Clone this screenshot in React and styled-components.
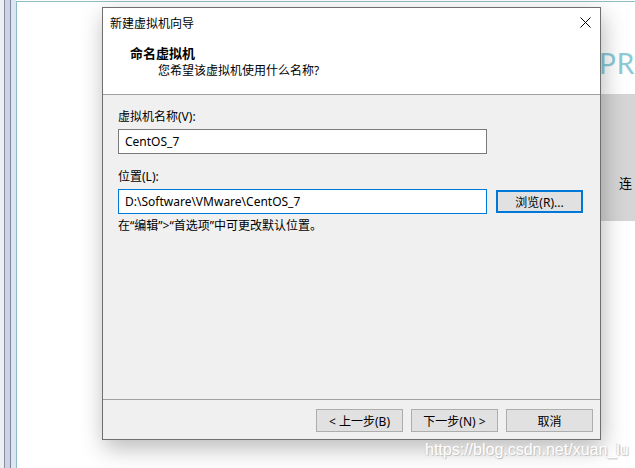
import styled, { createGlobalStyle } from "styled-components"

// VMware "new virtual machine" wizard, name page, over the workstation home view.

const Global = createGlobalStyle`
    html, body {
        margin: 0;
        padding: 0;
        background: #ffffff;
    }
    body {
        width: 635px;
        height: 468px;
        overflow: hidden;
        font-family: "Noto Sans", "Noto Sans CJK SC", sans-serif;
        font-size: 12px;
        color: #000000;
    }
`

const Desktop = styled.div`
    position: relative;
    width: 635px;
    height: 468px;
    overflow: hidden;
    display: flex;
    background: #ffffff;
`

const Rail = styled.div`
    display: flex;
    width: 16px;
    flex-shrink: 0;
`

const Strip = styled.div`
    width: ${p => p.w}px;
    background: ${p => p.bg};
`

const Main = styled.div`
    flex: 1;
    margin-top: 1px;
    border-top: 1px solid #8dbcc8;
    border-left: 1px solid #8dbcc8;
    display: flex;
    flex-direction: column;
    min-width: 0;
`

const Hero = styled.div`
    height: 92px;
    padding-left: 582px;
    padding-top: 30px;
    box-sizing: border-box;
    display: flex;
    align-items: center;
    white-space: nowrap;
    font-family: Lato, "Noto Sans", sans-serif;
    font-weight: 400;
    font-size: 28px;
    letter-spacing: 1px;
    color: #8ccad8;
`

const Band = styled.div`
    margin-left: 380px;
    height: 127px;
    background: #d5d5d5;
    padding-left: 222px;
    display: flex;
    align-items: center;
    padding-top: 50px;
    box-sizing: border-box;
    white-space: nowrap;
    font-size: 13px;
`

const Dialog = styled.div`
    position: absolute;
    left: 102px;
    top: 7px;
    width: 499px;
    height: 433px;
    box-sizing: border-box;
    border: 1px solid #6f6f6f;
    background: #f0f0f0;
    display: flex;
    flex-direction: column;
    box-shadow: 2px 8px 22px rgba(0, 0, 0, 0.28);
`

const TitleBar = styled.div`
    height: 29px;
    flex-shrink: 0;
    background: #ffffff;
    display: flex;
    align-items: center;
    justify-content: space-between;
    padding: 0 9px 0 7px;
    font-size: 12px;
`

const Close = styled.svg`
    width: 11px;
    height: 11px;
    display: block;
`

const Header = styled.div`
    flex-shrink: 0;
    background: #ffffff;
    border-bottom: 1px solid #a0a0a0;
    padding: 7px 0 0 27px;
    box-sizing: border-box;
    height: 58px;
`

const Heading = styled.div`
    font-weight: 700;
    font-size: 13px;
    line-height: 18px;
`

const Sub = styled.div`
    margin-left: 28px;
    line-height: 18px;
`

const Body = styled.div`
    flex: 1;
    border-bottom: 1px solid #a0a0a0;
    padding: 14px 0 0 15px;
`

const Field = styled.div`
    margin-top: ${p => p.gap || 0}px;
`

const Label = styled.div`
    line-height: 16px;
    margin-bottom: 4px;
`

const Row = styled.div`
    display: flex;
    align-items: center;
    gap: 9px;
`

const Input = styled.div`
    width: 369px;
    height: 25px;
    box-sizing: border-box;
    border: 1px solid ${p => (p.focused ? "#0078d7" : "#7a7a7a")};
    background: #ffffff;
    padding-left: 6px;
    display: flex;
    align-items: center;
    white-space: nowrap;
`

const Button = styled.div`
    width: 87px;
    height: 23px;
    box-sizing: border-box;
    border: ${p => (p.primary ? "2px solid #0078d7" : "1px solid #adadad")};
    background: #e1e1e1;
    display: flex;
    align-items: center;
    justify-content: center;
    white-space: nowrap;
`

const Hint = styled.div`
    margin-top: 4px;
    line-height: 16px;
`

const Footer = styled.div`
    height: 39px;
    flex-shrink: 0;
    box-sizing: border-box;
    padding: 9px 7px 0 0;
    display: flex;
    justify-content: flex-end;
    gap: 8px;
`

const Watermark = styled.div`
    position: absolute;
    left: 425px;
    top: 441px;
    font-family: "Liberation Sans", Arial, sans-serif;
    font-size: 16px;
    color: #ffffff;
    text-shadow: 1px 1px 1px #bdbdbd, -1px 0 1px #d6d6d6;
    white-space: nowrap;
`

const App = () => {
    return (
        <Desktop>
            <Global />
            <Rail>
                <Strip w={4} bg="#eceff4" />
                <Strip w={1} bg="#8a8c96" />
                <Strip w={5} bg="#ccd2ea" />
                <Strip w={1} bg="#7e8792" />
                <Strip w={5} bg="#dbe6f2" />
            </Rail>
            <Main>
                <Hero>PRO</Hero>
                <Band>连</Band>
            </Main>

            <Dialog>
                <TitleBar>
                    <span>新建虚拟机向导</span>
                    <Close viewBox="0 0 11 11">
                        <path d="M0.5 0.5 L10.5 10.5 M10.5 0.5 L0.5 10.5" stroke="#000" strokeWidth="1" fill="none" />
                    </Close>
                </TitleBar>
                <Header>
                    <Heading>命名虚拟机</Heading>
                    <Sub>您希望该虚拟机使用什么名称?</Sub>
                </Header>
                <Body>
                    <Field>
                        <Label>虚拟机名称(V):</Label>
                        <Input>CentOS_7</Input>
                    </Field>
                    <Field gap={15}>
                        <Label>位置(L):</Label>
                        <Row>
                            <Input focused>D:\Software\VMware\CentOS_7</Input>
                            <Button primary>浏览(R)...</Button>
                        </Row>
                    </Field>
                    <Hint>在“编辑”&gt;“首选项”中可更改默认位置。</Hint>
                </Body>
                <Footer>
                    <Button>&lt; 上一步(B)</Button>
                    <Button>下一步(N) &gt;</Button>
                    <Button>取消</Button>
                </Footer>
            </Dialog>

            <Watermark>https://blog.csdn.net/xuan_lu</Watermark>
        </Desktop>
    )
}

export default App
